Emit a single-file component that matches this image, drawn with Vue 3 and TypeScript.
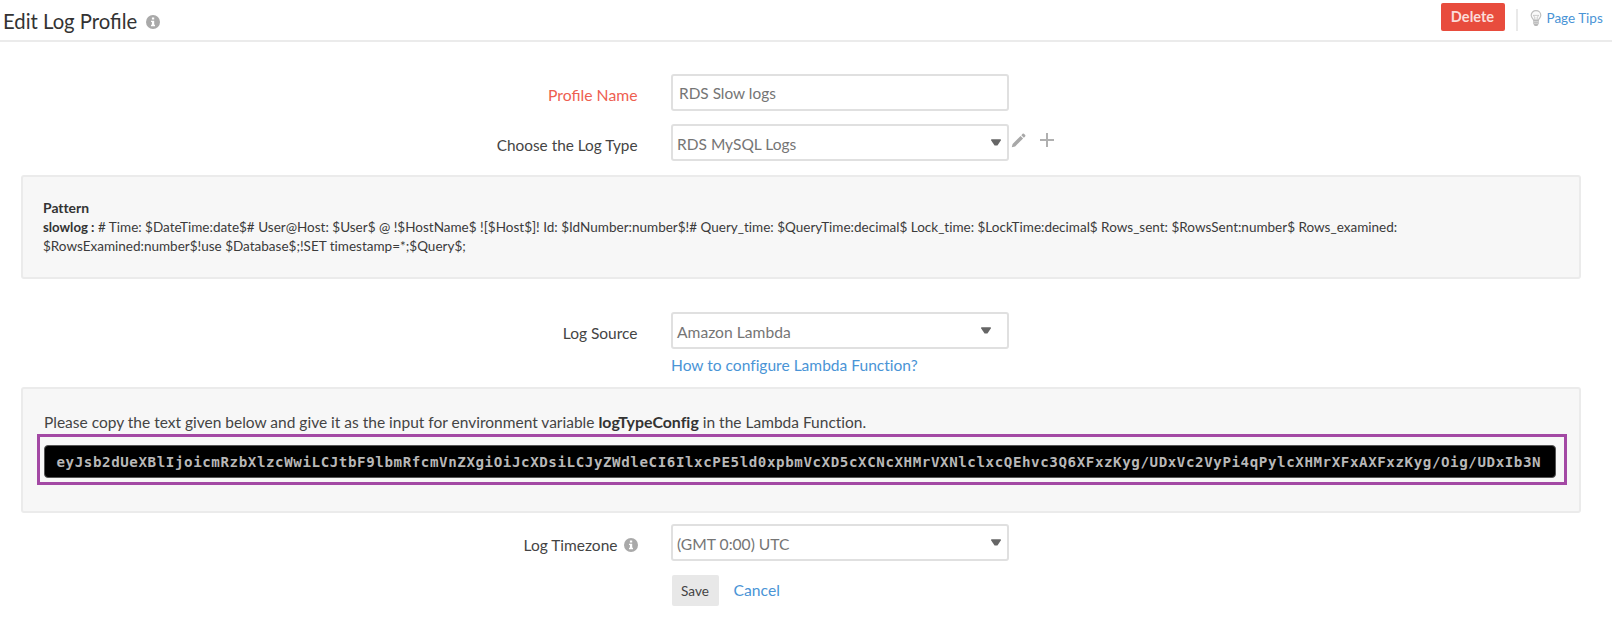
<script setup lang="ts">
import { ref } from 'vue'

const profileName = ref('RDS Slow logs')
const pattern =
  '# Time: $DateTime:date$# User@Host: $User$ @ !$HostName$ ![$Host$]! Id: $IdNumber:number$!# Query_time: $QueryTime:decimal$ Lock_time: $LockTime:decimal$ Rows_sent: $RowsSent:number$ Rows_examined: $RowsExamined:number$!use $Database$;!SET timestamp=*;$Query$;'
const config =
  'eyJsb2dUeXBlIjoicmRzbXlzcWwiLCJtbF9lbmRfcmVnZXgiOiJcXDsiLCJyZWdleCI6IlxcPE5ld0xpbmVcXD5cXCNcXHMrVXNlclxcQEhvc3Q6XFxzKyg/UDxVc2VyPi4qPylcXHMrXFxAXFxzKyg/Oig/UDxIb3N'
</script>

<template>
  <main class="page">
    <header class="header">
      <h1 class="title">Edit Log Profile</h1>
      <svg class="info" viewBox="0 0 14 14">
        <circle cx="7" cy="7" r="7" fill="#a9a9a9" />
        <path d="M5.9 2.5h2.3v2H5.9zM5 5.7h3.2v4.1H9v1.4H5V9.8h.9V7.1H5z" fill="#fff" />
      </svg>
      <div class="actions">
        <button class="delete">Delete</button>
        <span class="divider"></span>
        <svg class="bulb" viewBox="0 0 12 17">
          <path d="M3.6 10.2C3.3 8.8 1.2 7.7 1.2 5.2a4.8 4.5 0 0 1 9.6 0c0 2.5-2.1 3.6-2.4 5z" fill="#fafafa" stroke="#bfbfbf" stroke-width="1.2" />
          <path d="M3 5.4h6L7.2 7v3.2M4.8 10.2V7L3 5.4" fill="none" stroke="#c6c6c6" stroke-width=".9" />
          <path d="M3.3 10h5.4v3.8L7.3 16H4.7l-1.4-2.2z" fill="#b8b8b8" />
          <path d="M4 11.6h4M4 13.3h4" stroke="#e8e8e8" stroke-width=".6" />
        </svg>
        <a class="tips">Page Tips</a>
      </div>
    </header>

    <div class="row first">
      <label class="label required">Profile Name</label>
      <input v-model="profileName" class="field name" type="text" />
    </div>

    <div class="row second">
      <label class="label tight">Choose the Log Type</label>
      <div class="field select">
        <span class="tight">RDS MySQL Logs</span>
        <svg class="caret" viewBox="0 0 10 7"><path d="M.2.2h9.6v1.3L6.4 6.6H3.6L.2 1.5z" fill="#666" /></svg>
      </div>
      <svg class="pencil" viewBox="0 0 16 16">
        <path d="M.8 15.2l.9-3.6 8.5-8.5 2.7 2.7-8.5 8.5zM11 2.3L12.4.9q.7-.6 1.4 0l1.3 1.3q.6.7 0 1.4L13.7 5z" fill="#a8a8a8" />
      </svg>
      <svg class="plus" viewBox="0 0 14 14"><path d="M7 0v14M0 7h14" stroke="#b0b0b0" stroke-width="2" /></svg>
    </div>

    <section class="panel pattern">
      <strong class="heading">Pattern</strong>
      <p class="expression"><strong>slowlog :</strong> {{ pattern }}</p>
    </section>

    <div class="row third">
      <label class="label">Log Source</label>
      <div class="field select inset">
        <span>Amazon Lambda</span>
        <svg class="caret" viewBox="0 0 10 7"><path d="M.2.2h9.6v1.3L6.4 6.6H3.6L.2 1.5z" fill="#666" /></svg>
      </div>
    </div>
    <a class="help">How to configure Lambda Function?</a>

    <section class="panel lambda">
      <p class="note">Please copy the text given below and give it as the input for environment variable <strong>logTypeConfig</strong> in the Lambda Function.</p>
      <div class="highlight"><code class="code">{{ config }}</code></div>
    </section>

    <div class="row fourth">
      <label class="label">Log Timezone
        <svg class="info" viewBox="0 0 14 14">
          <circle cx="7" cy="7" r="7" fill="#a9a9a9" />
          <path d="M5.9 2.5h2.3v2H5.9zM5 5.7h3.2v4.1H9v1.4H5V9.8h.9V7.1H5z" fill="#fff" />
        </svg>
      </label>
      <div class="field select">
        <span>(GMT 0:00) UTC</span>
        <svg class="caret" viewBox="0 0 10 7"><path d="M.2.2h9.6v1.3L6.4 6.6H3.6L.2 1.5z" fill="#666" /></svg>
      </div>
    </div>

    <div class="buttons">
      <button class="save">Save</button>
      <a class="cancel">Cancel</a>
    </div>
  </main>
</template>

<style>
body { margin: 0; background: #fff; }
</style>

<style scoped>
* { box-sizing: border-box; }
.page { width: 1612px; height: 618px; overflow: hidden; background: #fff; color: #444; font-family: Lato, sans-serif; font-size: 15.5px; line-height: 20px; font-variant-ligatures: none; }
button { border: 0; padding: 0; font-family: inherit; }
svg { display: block; flex: none; }
a { color: #4a94d6; }
.header { display: flex; height: 42px; border-bottom: 2px solid #ebebeb; padding-left: 3px; }
.title { margin: 8px 7px 0 0; font-size: 20.3px; font-weight: 400; line-height: 26px; color: #333; width: 136px; white-space: nowrap; font-variant-ligatures: normal; }
.info { width: 14px; height: 14px; }
.header .info { margin-top: 15px; }
.actions { display: flex; margin-left: auto; padding-right: 8.5px; }
.delete { width: 64px; height: 28px; margin-top: 3.4px; border-radius: 2px; background: #e84c3d; color: #fbdcd9; font-size: 14.6px; font-weight: 700; line-height: 28px; }
.divider { width: 1.5px; height: 22px; margin: 9px 12px 0 11.5px; background: #e9e9e9; }
.bulb { width: 12px; height: 17px; margin: 10px 5px 0 0; }
.tips { width: 57px; margin-top: 8px; font-size: 13.5px; white-space: nowrap; }

.row { display: flex; align-items: flex-start; height: 36.5px; }
.label { display: flex; justify-content: flex-end; align-items: center; gap: 6px; width: 637.5px; margin: 10.5px 33.5px 0 0; white-space: nowrap; }
.required { color: #ee5e51; font-size: 15.75px; font-variant-ligatures: normal; }
.tight { font-size: 15.35px; }
.field { width: 338px; height: 36.5px; border: 2px solid #e0e0e0; border-radius: 3px; background: #fff; color: #757575; font-family: Lato, sans-serif; font-size: 15.4px; }
.name { padding: 1px 6px 0; outline: none; }
.select { display: flex; align-items: center; justify-content: space-between; padding: 3px 6px 0 4px; font-size: 15.65px; }
.select .tight { font-size: 15.5px; padding-top: 1px; }
.caret { width: 10px; height: 7px; margin-bottom: 2px; }
.inset { padding-right: 16px; }
.first { margin-top: 32px; }
.second { margin-top: 13.5px; }
.pencil { width: 15px; height: 15px; margin: 8.5px 0 0 2px; }
.plus { width: 14px; height: 14px; margin: 8.5px 0 0 14px; }

.panel { width: 1560px; margin-left: 21px; border: 2px solid #ebebeb; border-radius: 3px; background: #f7f7f7; }
.pattern { height: 104px; margin-top: 14.5px; padding: 20.5px 20px 0; font-size: 13.53px; line-height: 19px; color: #3b3b3b; }
.heading { display: block; font-size: 13.9px; color: #333; }
.expression { margin: 1px 0 0; width: 1385px; }
.expression strong { font-size: 13.2px; line-height: 1; color: #333; }
.third { margin-top: 33px; }
.help { display: block; width: 400px; margin: 6px 0 0 671px; font-size: 15.55px; }
.lambda { height: 126.5px; margin-top: 12px; padding: 23.5px 0 0 14px; }
.note { margin: 0 0 0 7px; font-size: 15.5px; white-space: nowrap; }
.note strong { font-size: 15.9px; line-height: 1; color: #333; }
.highlight { width: 1530px; height: 51px; margin-top: 2px; border: 3px solid #a349a4; padding: 8px 8px 7px 4px; }
.code { display: block; width: 1512px; height: 33px; border: 1px solid #555; border-radius: 4px; background: #000; color: #b8b8b8; padding-left: 11.5px; font: 700 14.2px/32px "DejaVu Sans Mono", monospace; letter-spacing: .567px; white-space: nowrap; overflow: hidden; }
.fourth { margin-top: 11px; }
.buttons { display: flex; align-items: center; gap: 15px; height: 31px; margin: 14.5px 0 0 671.5px; }
.save { width: 47px; height: 31px; border-radius: 2px; background: #e8e8e8; color: #444; font-size: 13.6px; }
.cancel { font-size: 15.7px; margin-top: -2px; }
</style>
